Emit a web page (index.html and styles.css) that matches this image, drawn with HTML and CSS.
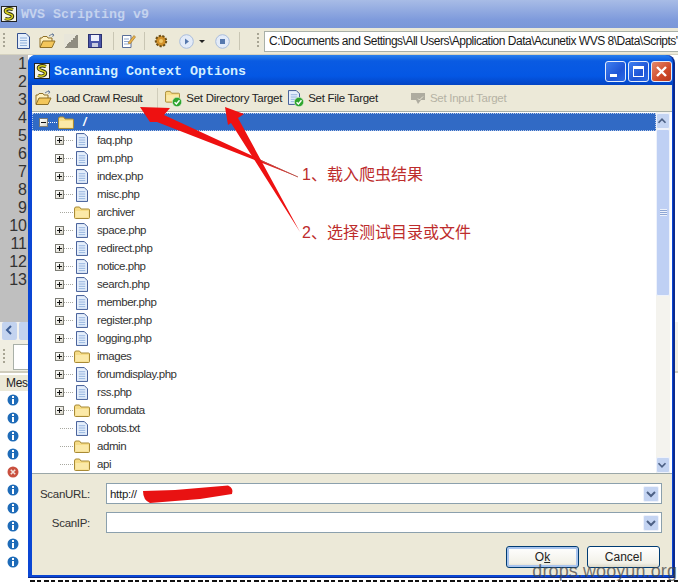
FILE: index.html
```html
<!DOCTYPE html>
<html lang="en">

<head>
  <meta charset="UTF-8">
  <meta name="viewport" content="width=device-width, initial-scale=1.0">
  <title>WVS Scripting v9</title>
  <link rel="stylesheet" href="styles.css">
</head>

<body>
  <svg class="defs" width="0" height="0">
    <symbol id="app" viewBox="0 0 16 16">
      <rect x="0.5" y="0.5" width="15" height="15" fill="#f4f4ea" stroke="#222"/>
      <path d="M12 3.5C8 2 4 3 4.5 5.5S11.5 7.5 11.5 10S7.5 14 4 12.5" fill="none" stroke="#2c2c10" stroke-width="3.4"/>
      <path d="M12 3.5C8 2 4 3 4.5 5.5S11.5 7.5 11.5 10S7.5 14 4 12.5" fill="none" stroke="#d9d21e" stroke-width="1.6"/>
    </symbol>
    <symbol id="doc" viewBox="0 0 13 16">
      <path d="M0.5 0.5H9L12.5 4V15.5H0.5Z" fill="#e4eefb" stroke="#34508f"/>
      <path d="M3 5H10M3 7.5H10M3 10H10M3 12.5H10" stroke="#8fb0dc"/>
    </symbol>
    <symbol id="folder" viewBox="0 0 16 13">
      <path d="M0.5 3V11.5Q0.5 12.5 1.5 12.5H14.5Q15.5 12.5 15.5 11.5V4Q15.5 3 14.5 3H7L5.5 1H2Q0.5 1 0.5 3Z" fill="#f6dc86" stroke="#a88a35"/>
      <path d="M1.5 5H14.5V11.5H1.5Z" fill="#fbe9a8"/>
    </symbol>
    <symbol id="open" viewBox="0 0 17 16">
      <path d="M1 14V5H3L4 3.5H8L9 5H13V8" fill="#fdf0c0" stroke="#8f6f25"/>
      <path d="M1 14.5L4 8H16L13 14.5Z" fill="#f3c65a" stroke="#8f6f25"/>
      <path d="M10 3Q12 0.5 15 2M15 2L13 0.5M15 2L13.5 3.8" fill="none" stroke="#6b7f9c"/>
    </symbol>
    <symbol id="check" viewBox="0 0 10 10">
      <circle cx="5" cy="5" r="4.7" fill="#2ea52e" stroke="#e6f3e0" stroke-width="0.6"/>
      <path d="M2.6 5.2L4.4 7L7.5 3.2" fill="none" stroke="#fff" stroke-width="1.4"/>
    </symbol>
    <symbol id="info" viewBox="0 0 12 12">
      <circle cx="6" cy="6" r="5.5" fill="#1e6bb8"/>
      <rect x="5" y="2" width="2" height="2" fill="#fff"/>
      <rect x="5" y="5" width="2" height="5" fill="#fff"/>
    </symbol>
    <symbol id="fail" viewBox="0 0 12 12">
      <circle cx="6" cy="6" r="5.5" fill="#c9503f"/>
      <path d="M3.8 3.8L8.2 8.2M8.2 3.8L3.8 8.2" stroke="#f3e2dc" stroke-width="1.6"/>
    </symbol>
    <symbol id="down" viewBox="0 0 16 16">
      <path d="M4 6L8 10L12 6" fill="none" stroke="#4d6185" stroke-width="2"/>
    </symbol>
    <symbol id="up" viewBox="0 0 16 16">
      <path d="M4 10L8 6L12 10" fill="none" stroke="#4d6185" stroke-width="2"/>
    </symbol>
  </svg>

  <div class="app">
    <div class="app-title">
      <svg class="app-icon"><use href="#app"/></svg>
      <span>WVS Scripting v9</span>
    </div>

    <div class="app-toolbar">
      <i class="grip"></i>
      <svg class="tool new" width="13" height="16"><use href="#doc"/></svg>
      <svg class="tool open" width="17" height="16"><use href="#open"/></svg>
      <i class="tool saveas"></i>
      <svg class="tool save" width="14" height="14" viewBox="0 0 14 14">
        <rect x="0.5" y="0.5" width="13" height="13" fill="#4a55a8" stroke="#2b3170"/>
        <rect x="3" y="1" width="8" height="6" fill="#eef0fa"/>
        <rect x="4" y="9" width="6" height="4" fill="#c9cce0"/>
      </svg>
      <i class="sep first"></i>
      <svg class="tool edit" width="15" height="16" viewBox="0 0 15 16">
        <path d="M1.5 2.5H10V14.5H1.5Z" fill="#fff" stroke="#5a6f9a"/>
        <path d="M3 6H8M3 8.5H8M3 11H8" stroke="#8fa8cf"/>
        <path d="M7 10L13 2.5L14.5 4L9 11Z" fill="#e8b24a" stroke="#9a6b1e" stroke-width="0.6"/>
      </svg>
      <i class="sep"></i>
      <svg class="tool gear" width="16" height="14" viewBox="0 0 16 14">
        <circle cx="8" cy="7" r="5.2" fill="#d2912a" stroke="#6d5018" stroke-width="2" stroke-dasharray="2.2 1.4"/>
        <circle cx="8" cy="7" r="2" fill="#f0c768"/>
      </svg>
      <svg class="tool play" width="15" height="15" viewBox="0 0 15 15">
        <circle cx="7.5" cy="7.5" r="6.8" fill="#e3ebf8" stroke="#a9bddd"/>
        <path d="M6 4.5L10 7.5L6 10.5Z" fill="#5678ad"/>
      </svg>
      <i class="caret"></i>
      <svg class="tool stop" width="15" height="15" viewBox="0 0 15 15">
        <circle cx="7.5" cy="7.5" r="6.8" fill="#e3ebf8" stroke="#a9bddd"/>
        <rect x="5" y="5" width="5" height="5" fill="#5678ad"/>
      </svg>
      <i class="sep last"></i>
      <i class="grip second"></i>
      <div class="path-box">C:\Documents and Settings\All Users\Application Data\Acunetix WVS 8\Data\Scripts'</div>
    </div>

    <div class="editor">
      <div class="gutter">1<br>2<br>3<br>4<br>5<br>6<br>7<br>8<br>9<br>10<br>11<br>12<br>13</div>
    </div>

    <div class="hscroll">
      <span class="hscroll-btn">
        <svg width="14" height="16" viewBox="0 0 14 16"><path d="M9 4L5 8L9 12" fill="none" stroke="#3e5f96" stroke-width="2"/></svg>
      </span>
      <span class="hscroll-btn next"></span>
    </div>

    <div class="findbar">
      <i class="grip"></i>
      <span class="find-input"></span>
    </div>

    <div class="messages">
      <div class="msg-tab">Mes</div>
      <div class="msg-list">
        <svg><use href="#info"/></svg>
        <svg><use href="#info"/></svg>
        <svg><use href="#info"/></svg>
        <svg><use href="#info"/></svg>
        <svg><use href="#fail"/></svg>
        <svg><use href="#info"/></svg>
        <svg><use href="#info"/></svg>
        <svg><use href="#info"/></svg>
        <svg><use href="#info"/></svg>
        <svg><use href="#info"/></svg>
      </div>
    </div>
  </div>

  <div class="dialog">
    <div class="dialog-title">
      <svg class="app-icon"><use href="#app"/></svg>
      <span class="dialog-name">Scanning Context Options</span>
      <span class="win-btn">
        <svg width="19" height="19" viewBox="0 0 19 19"><rect x="4" y="12" width="7" height="3" fill="#fff"/></svg>
      </span>
      <span class="win-btn">
        <svg width="19" height="19" viewBox="0 0 19 19"><rect x="4.5" y="4.5" width="10" height="10" fill="none" stroke="#fff"/><rect x="4" y="4" width="11" height="3" fill="#fff"/></svg>
      </span>
      <span class="win-btn close">
        <svg width="19" height="19" viewBox="0 0 19 19"><path d="M5 5L14 14M14 5L5 14" stroke="#fff" stroke-width="2.4"/></svg>
      </span>
    </div>

    <div class="dialog-toolbar">
      <button class="tb-btn load">
        <svg width="17" height="16"><use href="#open"/></svg>Load Crawl Result
      </button>
      <i class="tb-sep"></i>
      <button class="tb-btn dir">
        <span class="badged">
          <svg width="15" height="13"><use href="#folder"/></svg>
          <svg class="badge" width="10" height="10"><use href="#check"/></svg>
        </span>Set Directory Target
      </button>
      <button class="tb-btn file">
        <span class="badged">
          <svg width="12" height="15"><use href="#doc"/></svg>
          <svg class="badge" width="10" height="10"><use href="#check"/></svg>
        </span>Set File Target
      </button>
      <button class="tb-btn input" disabled>
        <svg width="16" height="13" viewBox="0 0 16 13">
          <path d="M1 1H15V8H11L8 12L6 8H1Z" fill="#aeaca0"/>
          <path d="M8 6.5L9.5 8L13 4.5" fill="none" stroke="#ece9d8"/>
        </svg>Set Input Target
      </button>
    </div>

    <div class="tree-wrap">
      <div class="tree">
        <div class="row root">
          <i class="exp minus"></i><i class="dots short"></i>
          <svg width="16" height="13"><use href="#folder"/></svg>
          <span class="root-name">/</span>
        </div>
        <div class="row"><i class="exp"></i><i class="dots"></i><svg class="ic" width="12" height="15"><use href="#doc"/></svg><span>faq.php</span></div>
        <div class="row"><i class="exp"></i><i class="dots"></i><svg class="ic" width="12" height="15"><use href="#doc"/></svg><span>pm.php</span></div>
        <div class="row"><i class="exp"></i><i class="dots"></i><svg class="ic" width="12" height="15"><use href="#doc"/></svg><span>index.php</span></div>
        <div class="row"><i class="exp"></i><i class="dots"></i><svg class="ic" width="12" height="15"><use href="#doc"/></svg><span>misc.php</span></div>
        <div class="row"><i class="exp none"></i><i class="dots"></i><svg class="fd" width="16" height="13"><use href="#folder"/></svg><span>archiver</span></div>
        <div class="row"><i class="exp"></i><i class="dots"></i><svg class="ic" width="12" height="15"><use href="#doc"/></svg><span>space.php</span></div>
        <div class="row"><i class="exp"></i><i class="dots"></i><svg class="ic" width="12" height="15"><use href="#doc"/></svg><span>redirect.php</span></div>
        <div class="row"><i class="exp"></i><i class="dots"></i><svg class="ic" width="12" height="15"><use href="#doc"/></svg><span>notice.php</span></div>
        <div class="row"><i class="exp"></i><i class="dots"></i><svg class="ic" width="12" height="15"><use href="#doc"/></svg><span>search.php</span></div>
        <div class="row"><i class="exp"></i><i class="dots"></i><svg class="ic" width="12" height="15"><use href="#doc"/></svg><span>member.php</span></div>
        <div class="row"><i class="exp"></i><i class="dots"></i><svg class="ic" width="12" height="15"><use href="#doc"/></svg><span>register.php</span></div>
        <div class="row"><i class="exp"></i><i class="dots"></i><svg class="ic" width="12" height="15"><use href="#doc"/></svg><span>logging.php</span></div>
        <div class="row"><i class="exp"></i><i class="dots"></i><svg class="fd" width="16" height="13"><use href="#folder"/></svg><span>images</span></div>
        <div class="row"><i class="exp"></i><i class="dots"></i><svg class="ic" width="12" height="15"><use href="#doc"/></svg><span>forumdisplay.php</span></div>
        <div class="row"><i class="exp"></i><i class="dots"></i><svg class="ic" width="12" height="15"><use href="#doc"/></svg><span>rss.php</span></div>
        <div class="row"><i class="exp"></i><i class="dots"></i><svg class="fd" width="16" height="13"><use href="#folder"/></svg><span>forumdata</span></div>
        <div class="row"><i class="exp none"></i><i class="dots"></i><svg class="ic" width="12" height="15"><use href="#doc"/></svg><span>robots.txt</span></div>
        <div class="row"><i class="exp none"></i><i class="dots"></i><svg class="fd" width="16" height="13"><use href="#folder"/></svg><span>admin</span></div>
        <div class="row"><i class="exp none"></i><i class="dots"></i><svg class="fd" width="16" height="13"><use href="#folder"/></svg><span>api</span></div>
      </div>
      <div class="vscroll">
        <span class="sb-btn"><svg width="14" height="16" viewBox="1 0 14 16"><use href="#up"/></svg></span>
        <span class="sb-thumb"><i></i></span>
        <span class="sb-track"></span>
        <span class="sb-btn"><svg width="14" height="16" viewBox="1 0 14 16"><use href="#down"/></svg></span>
      </div>
    </div>

    <div class="dialog-form">
      <div class="field">
        <label>ScanURL:</label>
        <div class="combo">
          <span>http://</span>
          <span class="combo-btn"><svg width="16" height="16"><use href="#down"/></svg></span>
        </div>
      </div>
      <div class="field">
        <label>ScanIP:</label>
        <div class="combo">
          <span></span>
          <span class="combo-btn"><svg width="16" height="16"><use href="#down"/></svg></span>
        </div>
      </div>
      <div class="actions">
        <button class="xp-btn default">O<u>k</u></button>
        <button class="xp-btn">Cancel</button>
      </div>
    </div>
  </div>

  <svg class="marks" width="678" height="582" viewBox="0 0 678 582">
    <path d="M140 107L170 108L164 115L298 177L157 122L150 122Z" fill="#ee1111"/>
    <path d="M253 157L298 177" stroke="#b8524a" stroke-width="1"/>
    <path d="M225 107L244 114L238 118L300 232L231 123L228 125Z" fill="#ee1111"/>
    <path d="M143 491L175 490L228 485.5Q234 488 232 494L200 499L150 503Q143 500 143 491Z" fill="#e81212"/>
  </svg>

  <div class="note one">1、载入爬虫结果</div>
  <div class="note two">2、选择测试目录或文件</div>
  <div class="bottom-edge"></div>
  <div class="watermark">drops.wooyun.org</div>
</body>

</html>
```

FILE: styles.css
```css
html,
body {
  margin: 0;
  height: 100%;
}

body {
  position: relative;
  width: 678px;
  height: 582px;
  overflow: hidden;
  background: #fff;
  font-family: "Liberation Sans", Arial, sans-serif;
  font-size: 12px;
  color: #222;
}

.defs {
  position: absolute;
}

i {
  display: block;
  flex: none;
}

svg {
  display: block;
  flex: none;
}

/* main window, behind the dialog */
.app {
  display: flex;
  flex-direction: column;
  height: 582px;
}

.app-title {
  display: flex;
  align-items: center;
  gap: 4px;
  height: 28px;
  padding-left: 1px;
  box-sizing: border-box;
  background: linear-gradient(#a8bce6, #7f9bdc 70%, #7b97d8);
  font: bold 13.33px "Liberation Mono", monospace;
  color: #c4d2ee;
}

.app-icon {
  width: 16px;
  height: 16px;
}

.app-toolbar {
  display: flex;
  align-items: center;
  height: 27px;
  background: #ece9d8;
  border-bottom: 1px solid #d5d2c0;
  box-sizing: border-box;
  overflow: hidden;
}

.grip {
  width: 2px;
  height: 16px;
  margin-left: 3px;
  background: repeating-linear-gradient(#a8a594 0 2px, transparent 2px 4px);
}

.grip.second {
  margin-left: 17px;
}

.tool.new {
  margin-left: 12px;
}

.tool.open {
  margin-left: 9px;
}

.tool.saveas {
  width: 14px;
  height: 14px;
  margin-left: 8px;
  background: linear-gradient(135deg, #e8e6da 50%, #8f8c80 50%);
}

.tool.save {
  margin-left: 10px;
}

.sep {
  width: 1px;
  height: 18px;
  margin-left: 8px;
  background: #c9c6b4;
}

.sep.first {
  margin-left: 11px;
}

.sep.last {
  margin-left: 9px;
}

.tool.edit {
  margin-left: 7px;
}

.tool.gear {
  margin-left: 8px;
}

.tool.play {
  margin-left: 10px;
}

.caret {
  margin-left: 5px;
  border: 3px solid transparent;
  border-top: 3px solid #222;
  border-bottom: 0;
}

.tool.stop {
  margin-left: 10px;
}

.path-box {
  flex: none;
  width: 420px;
  height: 21px;
  margin-left: 5px;
  padding-left: 4px;
  box-sizing: border-box;
  background: #fff;
  border: 1px solid #a9b0a8;
  border-right: 0;
  line-height: 19px;
  letter-spacing: -0.5px;
  white-space: nowrap;
  overflow: hidden;
  color: #1a1a1a;
}

.editor {
  height: 267px;
  overflow: hidden;
}

.gutter {
  width: 28px;
  height: 100%;
  padding-right: 1px;
  box-sizing: border-box;
  background: #bfbfbf;
  text-align: right;
  font-size: 16px;
  line-height: 18px;
  color: #333;
}

.hscroll {
  display: flex;
  gap: 2px;
  height: 18px;
  padding-left: 2px;
  background: #f4f3ee;
}

.hscroll-btn {
  width: 15px;
  background: #c3d3ef;
  border-radius: 2px;
}

.hscroll-btn.next {
  width: 12px;
}

.findbar {
  display: flex;
  align-items: center;
  gap: 8px;
  height: 33px;
  padding-top: 3px;
  box-sizing: border-box;
  background: #f0eee2;
  border-bottom: 2px solid #cfccbc;
}

.find-input {
  width: 20px;
  height: 24px;
  background: #fff;
  border: 1px solid #a9b0a8;
  border-right: 0;
}

.messages {
  flex: 1;
  overflow: hidden;
  border-top: 2px solid #fff;
}

.msg-tab {
  width: 28px;
  height: 16px;
  padding-left: 6px;
  box-sizing: border-box;
  background: #ece9d8;
  font-size: 12px;
  line-height: 16px;
  letter-spacing: -0.3px;
  white-space: nowrap;
  overflow: hidden;
}

.msg-list {
  display: flex;
  flex-direction: column;
  gap: 6px;
  padding: 3px 0 0 7px;
}

.msg-list svg {
  width: 12px;
  height: 12px;
}

/* dialog */
.dialog {
  position: absolute;
  left: 28px;
  top: 55px;
  width: 647px;
  height: 523px;
  box-sizing: border-box;
  display: flex;
  flex-direction: column;
  padding: 0 1px 2px 4px;
  background: #0a46d4;
  border-right: 2px solid #0a2a8e;
  border-bottom: 1px solid #0a2a8e;
  border-radius: 8px 8px 0 0;
}

.dialog-title {
  display: flex;
  align-items: center;
  gap: 2px;
  height: 30px;
  flex: none;
  margin: 0 -1px 0 -4px;
  padding: 2px 1px 0 6px;
  box-sizing: border-box;
  border-radius: 8px 8px 0 0;
  background: linear-gradient(#2a80ec, #0a5be2 20%, #0457e4 70%, #0344c4);
}

.dialog-name {
  flex: 1;
  margin-left: 2px;
  font: bold 13.33px "Liberation Mono", monospace;
  color: #d4efff;
}

.win-btn {
  width: 19px;
  height: 19px;
  margin-left: 0;
  border: 1px solid #e4ecfa;
  border-radius: 3px;
  background: linear-gradient(135deg, #3f7ff0, #1f55d6 60%, #2c6ae6);
}

.win-btn.close {
  background: linear-gradient(135deg, #e48a6c, #cf4a2a 60%, #b83a20);
}

.dialog-toolbar {
  display: flex;
  align-items: center;
  height: 27px;
  flex: none;
  box-sizing: border-box;
  background: #ece9d8;
  border-bottom: 1px solid #a9b0a8;
}

.tb-btn {
  display: flex;
  align-items: center;
  gap: 4px;
  padding: 0;
  border: 0;
  background: none;
  font: inherit;
  font-size: 11.5px;
  letter-spacing: -0.28px;
  color: #222;
  white-space: nowrap;
}

.tb-btn.load {
  margin-left: 3px;
  letter-spacing: -0.45px;
}

.tb-sep {
  width: 1px;
  height: 20px;
  margin-left: 15px;
  background: #d0cdbb;
}

.tb-btn.dir {
  margin-left: 7px;
}

.tb-btn.dir .badged {
  width: 17px;
}

.tb-btn.file {
  margin-left: 6px;
}

.tb-btn.file .badged {
  width: 16px;
}

.tb-btn.input {
  margin-left: 32px;
  color: #b5b2a4;
}

.badged {
  position: relative;
  display: block;
  height: 16px;
}

.badge {
  position: absolute;
  right: 0;
  bottom: -1px;
}

.tree-wrap {
  display: flex;
  flex: 1;
  min-height: 0;
  background: #fff;
  border-bottom: 1px solid #9aa7a8;
}

.tree {
  flex: 1;
  overflow: hidden;
}

.row {
  display: flex;
  align-items: center;
  height: 18px;
  padding-left: 23px;
  color: #333;
  font-size: 11.5px;
  letter-spacing: -0.45px;
}

.row span {
  white-space: nowrap;
}

.row.root {
  height: 18px;
  margin: 1px 0 0;
  padding-left: 6px;
  box-sizing: border-box;
  background: #316ac5;
  border: 1px dotted #b9c9e6;
}

.root-name {
  margin-left: 9px;
  font: italic bold 12px "Liberation Sans", sans-serif;
  color: #fff;
}

.exp {
  position: relative;
  width: 9px;
  height: 9px;
  box-sizing: border-box;
  border: 1px solid #7c7c74;
  background: linear-gradient(135deg, #fff, #d8d5c8);
}

.exp::before {
  content: "";
  position: absolute;
  left: 1px;
  top: 3px;
  width: 5px;
  height: 1px;
  background: #111;
}

.exp::after {
  content: "";
  position: absolute;
  left: 3px;
  top: 1px;
  width: 1px;
  height: 5px;
  background: #111;
}

.exp.minus::after {
  display: none;
}

.exp.none {
  visibility: hidden;
}

.dots {
  width: 9px;
  height: 1px;
  background: repeating-linear-gradient(90deg, #a8a8a0 0 1px, transparent 1px 2px);
}

.dots.short {
  width: 9px;
  margin-right: 1px;
  background: repeating-linear-gradient(90deg, #fff 0 1px, transparent 1px 2px);
}

.exp.none + .dots {
  margin-left: -4px;
  width: 13px;
}

.row .ic {
  margin: 0 9px 0 3px;
}

.row .fd {
  margin: 0 7px 0 1px;
}

.vscroll {
  display: flex;
  flex-direction: column;
  width: 14px;
  flex: none;
  margin-right: 2px;
  padding-top: 1px;
  background: #f4f3ee;
}

.sb-btn {
  height: 16px;
  flex: none;
  background: #c4d4f2;
  border: 1px solid #eef2fb;
  box-sizing: border-box;
  border-radius: 2px;
}

.sb-btn svg {
  margin: -1px;
}

.sb-thumb {
  display: flex;
  align-items: center;
  justify-content: center;
  height: 167px;
  flex: none;
  box-sizing: border-box;
  background: #bfd0f4;
  border: 1px solid #eef2fb;
  border-radius: 2px;
}

.sb-thumb i {
  width: 7px;
  height: 7px;
  background: repeating-linear-gradient(#eef2fb 0 1px, #8ea6d4 1px 2px);
}

.sb-track {
  flex: 1;
}

.dialog-form {
  display: flex;
  flex-direction: column;
  height: 101px;
  flex: none;
  box-sizing: border-box;
  padding-top: 9px;
  background: #ece9d8;
}

.field {
  display: grid;
  grid-template-columns: 58px 556px;
  gap: 16px;
  align-items: center;
  height: 21px;
  margin-bottom: 8px;
  font-size: 11.5px;
  letter-spacing: -0.3px;
  color: #333;
}

.field label {
  text-align: right;
}

.combo {
  display: flex;
  align-items: center;
  justify-content: space-between;
  height: 21px;
  box-sizing: border-box;
  padding: 0 2px 0 3px;
  background: #fff;
  border: 1px solid #8ba0ad;
  font-size: 11.5px;
  color: #222;
}

.combo-btn {
  width: 16px;
  height: 16px;
  background: #c4d4f2;
  border: 1px solid #eef2fb;
  box-sizing: border-box;
  border-radius: 2px;
}

.combo-btn svg {
  margin: -1px;
}

.actions {
  display: flex;
  justify-content: flex-end;
  gap: 8px;
  margin-top: 5px;
  padding-right: 12px;
}

.xp-btn {
  width: 73px;
  height: 22px;
  padding: 0;
  border: 1px solid #003c74;
  border-radius: 3px;
  background: linear-gradient(#fff, #f2f1e8 80%, #dcd8c8);
  font: inherit;
  color: #222;
}

.xp-btn.default {
  box-shadow: inset 0 0 0 2px #a8c4ee;
}

/* overlays drawn on top of the screenshot */
.marks {
  position: absolute;
  left: 0;
  top: 0;
  pointer-events: none;
}

.note {
  position: absolute;
  left: 302px;
  font-family: "Liberation Sans", "Noto Sans CJK SC", sans-serif;
  font-size: 16px;
  line-height: 18px;
  color: #bd2c2c;
  white-space: nowrap;
}

.note.one {
  top: 166px;
}

.note.two {
  top: 224px;
}

.bottom-edge {
  position: absolute;
  left: 30px;
  right: 0;
  bottom: 0;
  height: 2px;
  background: repeating-linear-gradient(90deg, #111 0 5px, #fff 5px 7px, #111 7px 11px, #fff 11px 14px);
}

.watermark {
  position: absolute;
  right: 1px;
  bottom: 0;
  font-size: 18px;
  line-height: 21px;
  letter-spacing: 0.1px;
  color: rgba(70, 70, 70, 0.75);
  white-space: nowrap;
}
```
